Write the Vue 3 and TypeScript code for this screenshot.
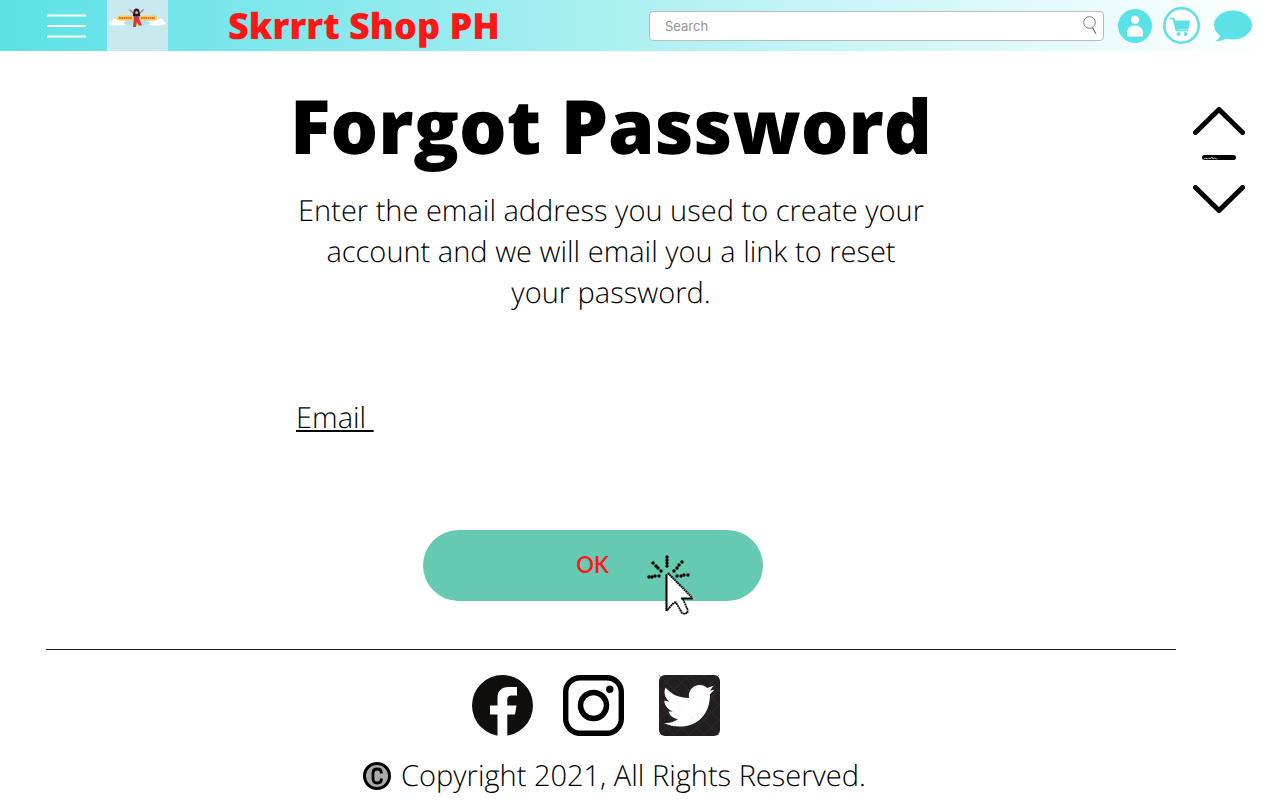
<script setup lang="ts">
import { ref } from 'vue'

const query = ref('')
const email = ref('')

const rays: [number, number][] = [
  [20, 3], [20, 6], [20, 9], [20, 12],
  [6, 9], [9, 12], [11, 14], [14, 17],
  [35, 8], [32, 11], [30, 14], [27, 17],
  [2, 23], [5, 23], [8, 22], [12, 22],
  [30, 22], [34, 22], [37, 21], [41, 21],
]
</script>

<template>
  <div class="page">
    <header class="topbar">
      <button class="icon-btn menu" type="button" aria-label="Menu">
        <svg width="40" height="24" viewBox="0 0 40 24">
          <path d="M0 1.500h39M0 12h39M0 22.500h39" stroke="#fff" stroke-width="2" />
        </svg>
      </button>
      <a class="logo" href="#" aria-label="Home">
        <svg width="61" height="51" viewBox="0 0 61 51">
          <rect width="61" height="51" fill="#c8eaee" />
          <g fill="#fff">
            <ellipse cx="12" cy="23" rx="10" ry="2.600" />
            <circle cx="8" cy="21" r="2.500" /><circle cx="13" cy="21" r="2.500" />
            <ellipse cx="49" cy="23" rx="10" ry="2.600" />
            <circle cx="49" cy="21" r="2.500" /><circle cx="54" cy="21" r="2.500" />
          </g>
          <ellipse cx="30" cy="23" rx="13" ry="3" fill="#b1e1ea" />
          <rect x="10" y="15.500" width="40" height="5" rx="2.500" fill="#fbd04b" />
          <path d="M12 18h13M34 18h14" stroke="#e2703b" stroke-width="2" stroke-dasharray="1.700 .5" />
          <path d="M22.500 9.500l4.500 4.500M36.500 9.500l-4.500 4.500" stroke="#a76f83" stroke-width="1.200" />
          <path d="M26 13h7l-1 6h-5z" fill="#963d84" />
          <path d="M26.500 12c0-2 1-3.500 3-3.500s3 1.500 3 3.500l.7 4h-7.400z" fill="#25152b" />
          <circle cx="29.600" cy="12.500" r="1.500" fill="#e5a98d" />
          <path d="M27 18.500h5l3 7h-3L29.800 22l-.8 5h-3z" fill="#e6332c" />
        </svg>
      </a>
      <span class="brand">Skrrrt Shop PH</span>
      <form class="search" role="search" @submit.prevent>
        <input v-model="query" type="text" placeholder="Search" aria-label="Search" />
        <button class="icon-btn" type="submit" aria-label="Submit search">
          <svg width="14" height="19" viewBox="0 0 14 19" fill="none" stroke="#777" stroke-width="1">
            <circle cx="6.500" cy="6.500" r="5.800" />
            <path d="M9.500 11.500l3.500 6.500" stroke-width="1.300" />
          </svg>
        </button>
      </form>
      <button class="icon-btn user" type="button" aria-label="Account">
        <svg width="34" height="34" viewBox="0 0 34 34">
          <circle cx="17" cy="17" r="17" fill="#5ce1e6" />
          <circle cx="17" cy="10.800" r="4" fill="#fff" />
          <path d="M9 26.500v-2.500c0-4 3-7.500 8-7.500s8 3.500 8 7.500v2.500q0 1-1 1H10q-1 0-1-1z" fill="#fff" />
        </svg>
      </button>
      <button class="icon-btn cart" type="button" aria-label="Cart">
        <svg width="37" height="37" viewBox="0 0 37 37">
          <circle cx="18.500" cy="18.500" r="17.200" fill="#fff" stroke="#5ce1e6" stroke-width="2.500" />
          <path d="M7 11.500h3.500L13.500 23.500H25" fill="none" stroke="#5ce1e6" stroke-width="1.700" stroke-linejoin="round" />
          <path d="M11 13.500h16l-1.500 9H13z" fill="#5ce1e6" />
          <circle cx="15.500" cy="27" r="1.900" fill="#5ce1e6" /><circle cx="22.500" cy="27" r="1.900" fill="#5ce1e6" />
        </svg>
      </button>
      <button class="icon-btn chat" type="button" aria-label="Messages">
        <svg width="38" height="32" viewBox="0 0 38 32">
          <path d="M19 .5C29.500.5 38 7 38 15s-8.500 14.500-19 14.500c-2.700 0-5.300-.4-7.600-1.100C8.500 30.500 5 31.500 1 31.200c2.500-1.200 4.500-3 5.200-5.500C2.300 23 0 19.200 0 15 0 7 8.500.5 19 .5z" fill="#5ce1e6" />
        </svg>
      </button>
    </header>

    <div class="body">
      <main class="content">
        <h1>Forgot Password</h1>
        <p class="intro">Enter the email address you used to create your account and we will email you a link to reset your password.</p>
        <form class="reset" @submit.prevent>
          <div class="field">
            <label for="email">Email&nbsp;</label>
            <input id="email" v-model="email" type="email" />
          </div>
          <button class="ok" type="submit">
            OK
            <svg class="pointer" width="48" height="64" viewBox="0 0 48 64" aria-hidden="true">
              <circle v-for="([x, y], i) in rays" :key="i" :cx="x" :cy="y" r="1.700" />
              <path d="M20 20v36l8-7h2l6 11 3 1 3-2v-3l-5-11h9v-2z" fill="#fff" />
              <path d="M19.500 20v37" stroke="#000" stroke-width="2" />
              <path d="M21 19l24 24.500" stroke="#000" stroke-width="2" stroke-dasharray="1.700 .6" />
              <path d="M36 45l4.500 10.500v3l-2.500 1.500-3-1-6-10.500h-2L19.500 57" fill="none" stroke="#000" stroke-width="1.800" stroke-dasharray="2 .5" />
              <path d="M46 44.500H34" stroke="#000" stroke-width="2" />
            </svg>
          </button>
        </form>
      </main>

      <nav class="scroller" aria-label="Page scroll">
        <button class="icon-btn" type="button" aria-label="Scroll up">
          <svg width="52" height="28" viewBox="0 0 52 28"><path d="M2.500 25.500L26 2.500l23.500 23" /></svg>
        </button>
        <svg class="bar" width="34" height="5" viewBox="0 0 34 5">
          <path d="M2.500 2.500h29" />
          <path class="scratch" d="M2 4l2-1 1 1 2-1 1 1 2-2 1 2 2-1 2 1" />
        </svg>
        <button class="icon-btn" type="button" aria-label="Scroll down">
          <svg width="52" height="28" viewBox="0 0 52 28"><path d="M2.500 2.500L26 25.500l23.500-23" /></svg>
        </button>
      </nav>

      <footer class="footer">
        <div class="social">
          <a href="#" aria-label="Facebook">
            <svg width="61" height="61" viewBox="0 0 61 61">
              <circle cx="30.500" cy="30.500" r="30.500" fill="#100f0d" />
              <path d="M25.500 61V39.500H18V30.500h7.500V23c0-7 4-11 11-11H45v8.500h-5c-3.500 0-4.700 1.500-4.700 4.500v5.500H44.500l-1.500 9h-7.700V61z" fill="#fff" />
            </svg>
          </a>
          <a href="#" aria-label="Instagram">
            <svg width="61" height="61" viewBox="0 0 61 61" fill="none" stroke="#000">
              <rect x="2.700" y="2.700" width="55.600" height="55.600" rx="14.500" stroke-width="5.400" />
              <circle cx="30.500" cy="30.500" r="13" stroke-width="5.500" />
              <circle cx="46.800" cy="14.300" r="3.700" fill="#000" stroke="none" />
            </svg>
          </a>
          <a class="twitter" href="#" aria-label="Twitter">
            <svg width="61" height="61" viewBox="0 0 61 61">
              <rect width="61" height="61" rx="6" fill="#231f20" />
              <path d="M0 15L15 0M0 30L30 0M0 45L45 0M0 60L60 0M15 60L60 15M30 60L60 30M45 60L60 45M45 0L60 15M30 0L60 30M15 0L60 45M0 0L60 60M0 15L45 60M0 30L30 60M0 45L15 60" stroke="#3b3738" stroke-width=".5" />
              <path d="M6.500 12.500c6 7 14 10.500 23.500 10.500-1-7.500 4-13 10.500-13 3.500 0 5.500 1 7.700 3l6.300-2.200-3.500 4.700 4.500-.8-4.500 4.500C51 39 39 51.500 21 51.500c-6 0-11.500-1-16-3.500 6 .5 10-1 14-4-4.500-.5-8-3.200-9.500-7.500h4.500C9 34.500 5.500 31 5.300 25.500l5 1.200C6 23 4.300 17.500 6.500 12.500z" fill="#fff" />
              <path d="M15 40L30 25M30 45L45 30M15 25L35 45M32 20L48 35" stroke="#eee" stroke-width=".5" />
            </svg>
          </a>
        </div>
        <p class="copyright">
          <svg width="28" height="28" viewBox="0 0 28 28" aria-hidden="true">
            <circle cx="14" cy="14" r="12.500" fill="#aaa" stroke="#000" stroke-width="3" />
            <path d="M18.300 11.500v-1c0-2-1.500-3.500-4-3.500s-4.300 1.500-4.300 4v6c0 2.500 1.800 4 4.300 4s4-1.500 4-3.500v-1" fill="none" stroke="#000" stroke-width="2.800" />
          </svg>
          Copyright 2021, All Rights Reserved.
        </p>
      </footer>
    </div>
  </div>
</template>

<style>
body {
  background: #fff;
}
</style>

<style scoped>
.page {
  font-family: "Open Sans", "Noto Sans", sans-serif;
  color: #000;
  text-rendering: geometricPrecision;
}
.icon-btn {
  display: block;
  flex: none;
  padding: 0;
  border: 0;
  background: none;
  cursor: pointer;
}
svg {
  display: block;
}
.topbar {
  display: flex;
  align-items: center;
  height: 51px;
  padding: 0 28px 0 47px;
  background: linear-gradient(90deg, #5ce1e6, #fff 99%);
}
.logo {
  margin-left: 20px;
}
.brand {
  margin-left: 60px;
  font-size: 36px;
  font-weight: 800;
  line-height: 51px;
  color: #ff1616;
  white-space: nowrap;
}
.search {
  display: flex;
  flex: 0 1 455px;
  align-items: center;
  box-sizing: border-box;
  height: 30px;
  margin-left: auto;
  padding: 0 6px 0 15px;
  border: 1px solid #bbb;
  border-radius: 4px;
  background: #fff;
}
.search input {
  flex: 1;
  min-width: 0;
  padding: 0;
  border: 0;
  outline: 0;
  background: none;
  font: 13px Inter, sans-serif;
}
.search input::placeholder {
  color: #949494;
  opacity: 1;
}
.user {
  margin-left: 14px;
}
.cart {
  margin-left: 11px;
}
.chat {
  margin-left: 14px;
}
.body {
  display: grid;
  grid-template-columns: 1fr 104px;
  padding-left: 46px;
}
.content {
  display: flex;
  flex-direction: column;
  align-items: center;
  padding-top: 34px;
}
h1 {
  margin: 0;
  font-size: 75px;
  font-weight: 800;
  line-height: 80px;
  white-space: nowrap;
}
.intro {
  max-width: 630px;
  margin: 25px 0 84px;
  font-size: 29px;
  font-weight: 300;
  line-height: 41px;
  text-align: center;
}
.reset {
  display: flex;
  flex-direction: column;
  align-items: center;
  width: 100%;
  max-width: 630px;
}
.field {
  display: flex;
  width: 100%;
  font-size: 29px;
  font-weight: 300;
  line-height: 41px;
}
.field label {
  text-decoration: underline;
}
.field input {
  flex: 1;
  min-width: 0;
  padding: 0;
  border: 0;
  outline: 0;
  background: none;
  font: inherit;
}
.ok {
  position: relative;
  width: 340px;
  height: 71px;
  margin: 92px 37px 0 0;
  padding: 0 0 2px;
  border: 0;
  border-radius: 36px;
  background: #66c9b2;
  color: #ff1616;
  font: 600 22px Lato, sans-serif;
  cursor: pointer;
}
.pointer {
  position: absolute;
  top: 24px;
  left: 224px;
}
.scroller {
  display: flex;
  flex-direction: column;
  align-items: center;
  padding: 56px 18px 0 0;
}
.scroller path {
  fill: none;
  stroke: #000;
  stroke-width: 5;
  stroke-linecap: round;
  stroke-linejoin: round;
}
.scroller .scratch {
  stroke: #aaa;
  stroke-width: 1;
}
.bar {
  margin: 20px 0 25px;
}
.footer {
  display: flex;
  flex-direction: column;
  align-items: center;
  margin-top: 48px;
  border-top: 1px solid #222;
}
.social {
  display: flex;
  gap: 30px;
  padding: 25px 30px 0 0;
}
.twitter {
  margin-left: 5px;
}
.copyright {
  display: flex;
  gap: 10px;
  align-items: center;
  margin: 19px 0 0;
  padding-left: 7px;
  font-size: 29px;
  font-weight: 300;
  line-height: 41px;
}
</style>
